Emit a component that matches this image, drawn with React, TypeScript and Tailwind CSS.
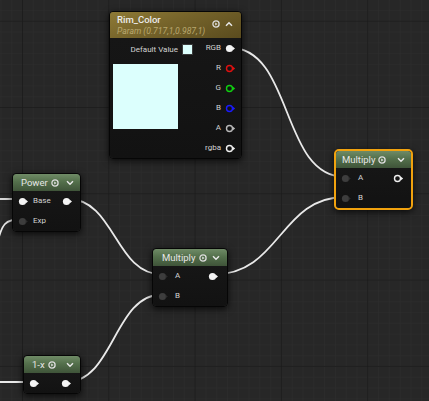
import React from "react";

function Grid() {
  return (
    <svg className="absolute inset-0" width="429" height="401">
      <defs>
        <pattern id="minor" x="22" y="20.7" width="10.79" height="10.79" patternUnits="userSpaceOnUse">
          <path d="M0 0 H10.79 M0 0 V10.79" stroke="#2e2e2e" strokeWidth="1" fill="none" />
        </pattern>
        <pattern id="major" x="22" y="20.7" width="86.3" height="86.3" patternUnits="userSpaceOnUse">
          <path d="M0 0 H86.3 M0 0 V86.3" stroke="#1a1a1a" strokeWidth="1.6" fill="none" />
        </pattern>
      </defs>
      <rect width="429" height="401" fill="url(#minor)" />
      <rect width="429" height="401" fill="url(#major)" />
    </svg>
  );
}

function Wires() {
  const s = { stroke: "#e9e9e9", strokeWidth: 1.8, fill: "none" } as const;
  return (
    <svg className="absolute inset-0" width="429" height="401">
      <path d="M229 47.5 C294 47.5, 280 177, 345 177" {...s} />
      <path d="M68 199 C115 199, 115 274.5, 162 274.5" {...s} />
      <path d="M66 382 C114 382, 114 294.5, 162 294.5" {...s} />
      <path d="M214 274.5 C280 274.5, 280 197, 345 197" {...s} />
      <path d="M-2 199 L22 199" {...s} />
      <path d="M-2 382 L33 382" {...s} />
      <path d="M22 219 C4 219, 2 226, -2 240" {...s} />
    </svg>
  );
}

type PinKind = "filled" | "empty" | "ring";

function Pin({ kind, color = "#f0f0f0" }: { kind: PinKind; color?: string }) {
  if (kind === "filled") {
    return (
      <svg width="11" height="9" viewBox="0 0 11 9" className="shrink-0">
        <circle cx="4.5" cy="4.5" r="3.6" fill="#f4f4f4" />
        <path d="M7.6 2.6 L10 4.5 L7.6 6.4 Z" fill="#f4f4f4" />
      </svg>
    );
  }
  if (kind === "empty") {
    return (
      <svg width="11" height="9" viewBox="0 0 11 9" className="shrink-0">
        <circle cx="4.5" cy="4.5" r="3.6" fill="#3d3d3d" />
        <path d="M7.6 2.8 L9.8 4.5 L7.6 6.2 Z" fill="#2c2c2c" />
      </svg>
    );
  }
  return (
    <svg width="11" height="9" viewBox="0 0 11 9" className="shrink-0">
      <circle cx="4.5" cy="4.5" r="3" fill="none" stroke={color} strokeWidth="1.4" />
      <path d="M8 2.8 L10.2 4.5 L8 6.2 Z" fill={color} />
    </svg>
  );
}

function PreviewIcon() {
  return (
    <svg width="8" height="8" viewBox="0 0 8 8" className="shrink-0">
      <circle cx="4" cy="4" r="3.1" fill="none" stroke="#dcdcdc" strokeWidth="1.3" />
      <path d="M3.2 2.4 L5.6 4 L3.2 5.6 Z" fill="#dcdcdc" />
    </svg>
  );
}

function ChevronDown() {
  return (
    <svg width="8" height="6" viewBox="0 0 8 6" className="shrink-0">
      <path d="M1 1.3 L4 4.3 L7 1.3" fill="none" stroke="#e6e6e6" strokeWidth="1.5" />
    </svg>
  );
}

function ChevronUp() {
  return (
    <svg width="8" height="6" viewBox="0 0 8 6" className="shrink-0">
      <path d="M1 4.7 L4 1.7 L7 4.7" fill="none" stroke="#e6e6e6" strokeWidth="1.5" />
    </svg>
  );
}

const greenHeader =
  "h-[17px] rounded-t-[3px] bg-[linear-gradient(180deg,#6f8b66_0%,#54704c_45%,#3f5439_100%)] flex items-center";
const bodyCls = "bg-[linear-gradient(180deg,#161616_0%,#121212_100%)] rounded-b-[3px]";
const nodeCls =
  "absolute rounded-[4px] border border-[#060606] shadow-[0_2px_7px_rgba(0,0,0,0.75)] overflow-hidden";
const label = "text-[8px] leading-none text-[#d2d2d2]";
const title = "text-[9.5px] leading-none text-[#e6e6e6]";

function RimNode() {
  return (
    <div className={`${nodeCls} left-[109px] top-[11px] w-[133px]`}>
      <div className="h-[26px] bg-[linear-gradient(160deg,#8e7a36_0%,#75632a_45%,#5a4b1e_100%)] flex items-center pl-[7px] pr-[8px]">
        <div className="flex flex-col">
          <span className="text-[9.5px] leading-[12px] font-medium text-[#ececec]">Rim_Color</span>
          <span className="text-[8.6px] leading-[10px] italic text-[#b9a86f]">Param (0.717,1,0.987,1)</span>
        </div>
        <div className="ml-auto flex items-center gap-[5px] mt-[-2px]">
          <PreviewIcon />
          <ChevronUp />
        </div>
      </div>
      <div className={`${bodyCls} flex h-[120px]`}>
        <div className="flex flex-col pl-[3px] pt-[6px]">
          <div className="flex items-center justify-end gap-[4px] w-[80px]">
            <span className={label}>Default Value</span>
            <div className="w-[11px] h-[11px] bg-[#dcfffd] border border-[#3a3a3a]" />
          </div>
          <div className="mt-[9px] w-[65px] h-[65px] bg-[#dcfffd]" />
        </div>
        <div className="ml-auto flex flex-col items-end pr-[5px]">
          {[
            { t: "RGB", k: "filled" as PinKind, c: "#f0f0f0" },
            { t: "R", k: "ring" as PinKind, c: "#e01010" },
            { t: "G", k: "ring" as PinKind, c: "#10d010" },
            { t: "B", k: "ring" as PinKind, c: "#1a1aff" },
            { t: "A", k: "ring" as PinKind, c: "#b8b8b8" },
            { t: "rgba", k: "ring" as PinKind, c: "#f0f0f0" },
          ].map((p) => (
            <div key={p.t} className="h-[20px] flex items-center gap-[4px]">
              <span className={label}>{p.t}</span>
              <Pin kind={p.k} color={p.c} />
            </div>
          ))}
        </div>
      </div>
    </div>
  );
}

function PowerNode() {
  return (
    <div className={`${nodeCls} left-[12px] top-[173px] w-[69px]`}>
      <div className={`${greenHeader} pl-[8px] pr-[6px]`}>
        <span className={title}>Power</span>
        <span className="ml-[3px]"><PreviewIcon /></span>
        <span className="ml-auto"><ChevronDown /></span>
      </div>
      <div className={`${bodyCls} flex flex-col`}>
        <div className="h-[20px] flex items-center pl-[5px] pr-[7px]">
          <Pin kind="filled" />
          <span className={`${label} ml-[4px]`}>Base</span>
          <span className="ml-auto"><Pin kind="filled" /></span>
        </div>
        <div className="h-[20px] flex items-center pl-[5px] pr-[7px]">
          <Pin kind="empty" />
          <span className={`${label} ml-[4px]`}>Exp</span>
        </div>
      </div>
    </div>
  );
}

function MidMultiply() {
  return (
    <div className={`${nodeCls} left-[152px] top-[248px] w-[76px]`}>
      <div className={`${greenHeader} pl-[9px] pr-[7px]`}>
        <span className={title}>Multiply</span>
        <span className="ml-[4px]"><PreviewIcon /></span>
        <span className="ml-auto"><ChevronDown /></span>
      </div>
      <div className={`${bodyCls} flex flex-col`}>
        <div className="h-[20px] flex items-center pl-[5px] pr-[8px]">
          <Pin kind="empty" />
          <span className={`${label} ml-[6px]`}>A</span>
          <span className="ml-auto"><Pin kind="filled" /></span>
        </div>
        <div className="h-[20px] flex items-center pl-[5px] pr-[8px]">
          <Pin kind="empty" />
          <span className={`${label} ml-[6px]`}>B</span>
        </div>
      </div>
    </div>
  );
}

function RightMultiply() {
  return (
    <div className="absolute left-[334px] top-[149px] rounded-[5px] border-2 border-[#f1a20e] shadow-[0_2px_7px_rgba(0,0,0,0.75)]">
      <div className="w-[75px] rounded-[3px] overflow-hidden">
        <div className={`${greenHeader} pl-[6px] pr-[6px]`}>
          <span className={title}>Multiply</span>
          <span className="ml-[3px]"><PreviewIcon /></span>
          <span className="ml-auto"><ChevronDown /></span>
        </div>
        <div className={`${bodyCls} flex flex-col`}>
          <div className="h-[20px] flex items-center pl-[5px] pr-[7px]">
            <Pin kind="empty" />
            <span className={`${label} ml-[6px]`}>A</span>
            <span className="ml-auto"><Pin kind="ring" color="#f0f0f0" /></span>
          </div>
          <div className="h-[20px] flex items-center pl-[5px] pr-[7px]">
            <Pin kind="empty" />
            <span className={`${label} ml-[6px]`}>B</span>
          </div>
        </div>
      </div>
    </div>
  );
}

function OneMinusNode() {
  return (
    <div className={`${nodeCls} left-[23px] top-[355px] w-[58px]`}>
      <div className={`${greenHeader} pl-[8px] pr-[6px]`}>
        <span className={title}>1-x</span>
        <span className="ml-[3px]"><PreviewIcon /></span>
        <span className="ml-auto"><ChevronDown /></span>
      </div>
      <div className={`${bodyCls} h-[20px] flex items-center pl-[5px] pr-[8px]`}>
        <Pin kind="filled" />
        <span className="ml-auto"><Pin kind="filled" /></span>
      </div>
    </div>
  );
}

export default function App() {
  return (
    <div className="relative w-[429px] h-[401px] overflow-hidden bg-[#272727] font-[Roboto,sans-serif]">
      <Grid />
      <Wires />
      <RimNode />
      <PowerNode />
      <MidMultiply />
      <RightMultiply />
      <OneMinusNode />
    </div>
  );
}
